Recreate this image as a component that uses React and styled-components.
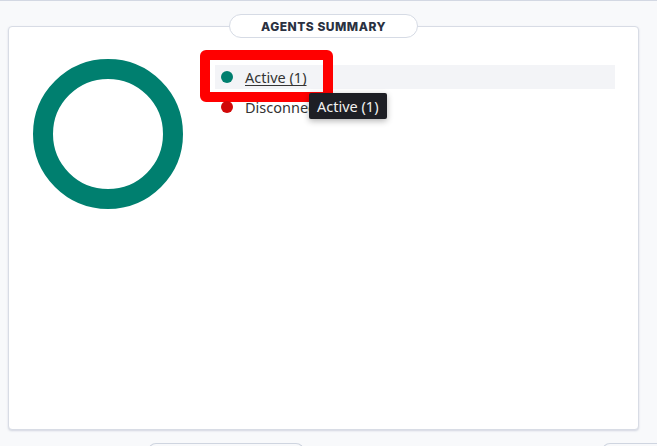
import React from "react";
import styled, { createGlobalStyle } from "styled-components";

const Global = createGlobalStyle`
  html, body { margin: 0; padding: 0; background: #f8f9fb; }
  body { font-family: "Noto Sans", "Open Sans", sans-serif; overflow: hidden; }
`;

const Page = styled.div`
  width: 657px;
  height: 446px;
  display: flex;
  flex-direction: column;
  overflow: hidden;
`;

const TabStrip = styled.div`
  display: flex;
  height: 2px;
  background: #ffffff;
  border-bottom: 1px solid #d3d8e3;
`;

const TabCell = styled.div`
  width: ${(p) => p.$w}px;
  border-right: 1px solid #d3d8e3;
  flex: ${(p) => (p.$w ? "none" : "1")};
  ${(p) => (!p.$w ? "border-right: none;" : "")}
`;

const Section = styled.section`
  display: flex;
  flex-direction: column;
  margin: 13px 18px 0 8px;
`;

const TitlePill = styled.div`
  align-self: center;
  position: relative;
  z-index: 1;
  box-sizing: border-box;
  width: 189px;
  height: 24px;
  margin-bottom: -12px;
  border: 1px solid #d6dbe5;
  border-radius: 12px;
  background: #ffffff;
  display: flex;
  align-items: center;
  justify-content: center;
  font-family: Inter, "Noto Sans", sans-serif;
  font-weight: 800;
  font-size: 12px;
  letter-spacing: 0.5px;
  color: #2a3141;
`;

const Card = styled.div`
  box-sizing: border-box;
  height: 404px;
  background: #ffffff;
  border: 1px solid #d8dce5;
  border-radius: 4px;
  box-shadow: 0 1px 2px rgba(140, 150, 175, 0.35);
  display: flex;
  align-items: flex-start;
  padding: 31px 0 0 23px;
`;

const Donut = styled.svg`
  flex: none;
  display: block;
`;

const Legend = styled.ul`
  list-style: none;
  margin: 7px 0 0 31px;
  padding: 0;
  width: 400px;
  display: flex;
  flex-direction: column;
  gap: 6px;
`;

const Row = styled.li`
  position: relative;
  height: 24px;
  display: flex;
  align-items: center;
  gap: 12px;
  padding-left: 6px;
  background: ${(p) => (p.$hover ? "#f3f4f7" : "transparent")};
`;

const Dot = styled.span`
  width: 12px;
  height: 12px;
  border-radius: 50%;
  background: ${(p) => p.$color};
  flex: none;
`;

const Label = styled.span`
  font-size: 14.5px;
  color: #343434;
  text-decoration: ${(p) => (p.$hover ? "underline" : "none")};
  text-underline-offset: 2px;
  white-space: nowrap;
`;

const Highlight = styled.div`
  position: absolute;
  left: -15px;
  top: -15px;
  width: 133px;
  height: 52px;
  box-sizing: border-box;
  border: 10px solid #ff0000;
  border-radius: 6px;
  pointer-events: none;
`;

const Tooltip = styled.div`
  position: absolute;
  left: 94px;
  top: 28px;
  z-index: 2;
  height: 26px;
  box-sizing: border-box;
  padding: 0 8px;
  display: flex;
  align-items: center;
  background: #1e1f25;
  color: #f2f2f2;
  font-size: 14.5px;
  border-radius: 2px;
  box-shadow: 0 2px 6px rgba(0, 0, 0, 0.3);
  white-space: nowrap;
`;

const NextRow = styled.div`
  display: flex;
  margin-top: 13px;
  padding-left: 148px;
  gap: 298px;
`;

const NextPill = styled.div`
  flex: none;
  height: 12px;
  width: ${(p) => p.$w}px;
  border: 1px solid #cfd5e0;
  border-bottom: none;
  border-radius: 8px 8px 0 0;
  background: #f8f9fb;
`;

const items = [
  { label: "Active (1)", color: "#007f6f", hover: true },
  { label: "Disconnected (0)", color: "#d10808" },
];

export default function App() {
  return (
    <Page>
      <Global />
      <TabStrip>
        <TabCell $w={31} />
        <TabCell $w={48} />
        <TabCell />
      </TabStrip>
      <Section>
        <TitlePill>AGENTS SUMMARY</TitlePill>
        <Card>
          <Donut width="152" height="152" viewBox="0 0 152 152">
            <circle cx="76" cy="76" r="65" fill="none" stroke="#007f6f" strokeWidth="20" />
          </Donut>
          <Legend>
            {items.map((it) => (
              <Row key={it.label} $hover={it.hover}>
                <Dot $color={it.color} />
                <Label $hover={it.hover}>{it.label}</Label>
                {it.hover && <Highlight />}
                {it.hover && <Tooltip>{it.label}</Tooltip>}
              </Row>
            ))}
          </Legend>
        </Card>
      </Section>
      <NextRow>
        <NextPill $w={154} />
        <NextPill $w={90} />
      </NextRow>
    </Page>
  );
}
